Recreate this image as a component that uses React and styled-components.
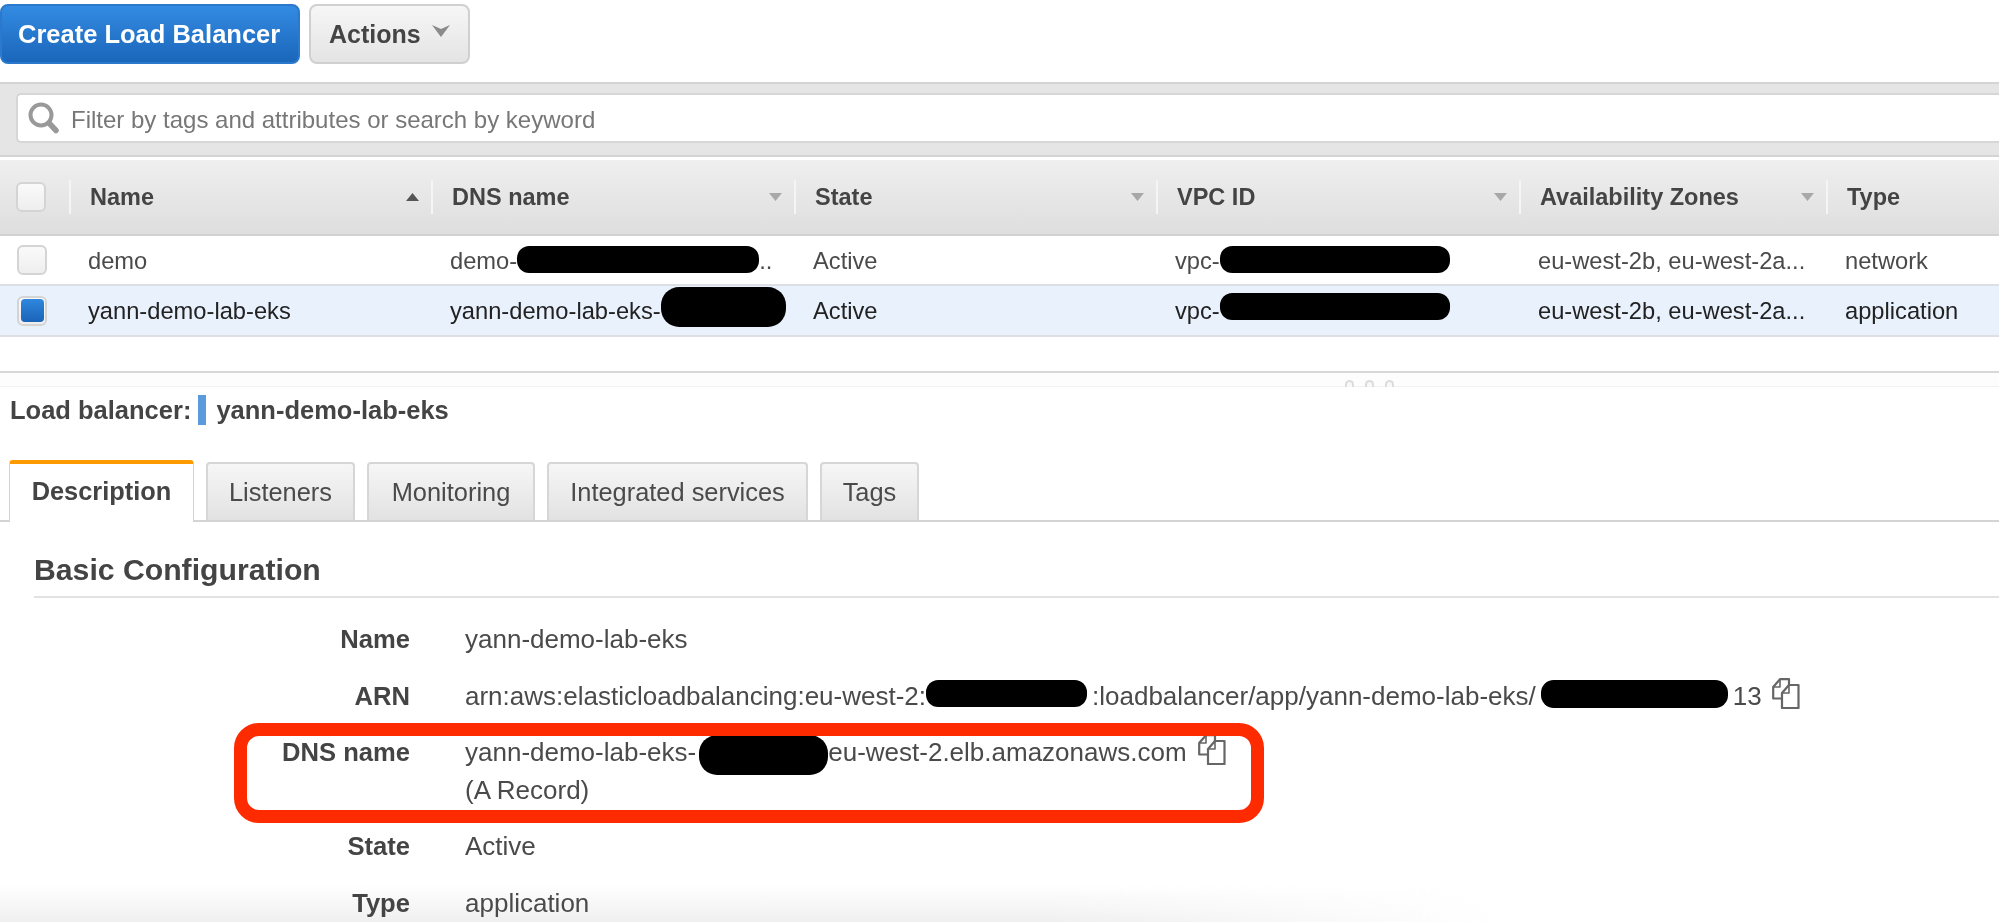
import React from "react";
import styled, { createGlobalStyle } from "styled-components";

const Global = createGlobalStyle`
  html, body { margin: 0; padding: 0; background: #fff; }
  body { font-family: "Liberation Sans", Arial, sans-serif; color: #444; overflow: hidden; }
`;

const Page = styled.div`
  position: relative;
  width: 1999px;
  height: 922px;
  overflow: hidden;
  background: #fff;
  filter: blur(0.6px);
`;

const Toolbar = styled.div`
  display: flex;
  gap: 9px;
  height: 82px;
  padding-top: 4px;
  box-sizing: border-box;
`;

const PrimaryButton = styled.button`
  width: 300px;
  height: 60px;
  box-sizing: border-box;
  padding: 0 0 0 16px;
  text-align: left;
  border: 2px solid #2a79cc;
  border-radius: 8px;
  background: linear-gradient(#338be2, #1a66ba);
  color: #fff;
  font: bold 25.5px "Liberation Sans", sans-serif;
`;

const SecondaryButton = styled.button`
  width: 161px;
  height: 60px;
  box-sizing: border-box;
  padding: 0 0 0 18px;
  display: flex;
  align-items: center;
  gap: 11px;
  border: 2px solid #d0d0d0;
  border-radius: 8px;
  background: linear-gradient(#f6f6f6, #e4e4e4);
  color: #444;
  font: bold 25px "Liberation Sans", sans-serif;
`;

const CaretLift = styled.span`
  display: flex;
  margin-bottom: 7px;
`;

const FilterBand = styled.div`
  height: 75px;
  box-sizing: border-box;
  padding: 9px 0 0 16px;
  background: #e5e5e5;
  border-top: 2px solid #d4d4d4;
  border-bottom: 2px solid #d4d4d4;
`;

const FilterInput = styled.div`
  height: 50px;
  box-sizing: border-box;
  display: flex;
  align-items: center;
  gap: 11px;
  padding-left: 10px;
  background: #fff;
  border: 2px solid #d6d6d6;
  border-right: 0;
  border-radius: 5px 0 0 5px;
  color: #777;
  font-size: 24px;
`;

const Placeholder = styled.span`
  padding-top: 3px;
`;

const Columns = "69px 362px 363px 362px 363px 307px 173px";

const HeaderRow = styled.div`
  display: grid;
  grid-template-columns: ${Columns};
  margin-top: 3px;
  height: 76px;
  box-sizing: border-box;
  background: linear-gradient(#efefef, #dedede);
  border-bottom: 2px solid #d2d2d2;
  align-items: center;
`;

const HeaderCell = styled.div`
  display: flex;
  align-items: center;
  justify-content: space-between;
  height: 34px;
  box-sizing: border-box;
  padding: 0 12px 0 19px;
  border-left: 2px solid #f5f5f5;
  font: bold 23.5px "Liberation Sans", sans-serif;
  color: #444;
`;

const CheckCell = styled.div`
  display: flex;
  align-items: center;
  padding-left: ${(p) => p.$x || 16}px;
`;

const Check = styled.span`
  display: flex;
  align-items: center;
  justify-content: center;
  width: 30px;
  height: 30px;
  box-sizing: border-box;
  border: 2px solid #d4d4d4;
  border-radius: 6px;
  background: linear-gradient(#fafafa, #eeeeee);
`;

const CheckFill = styled.span`
  width: 23px;
  height: 23px;
  border-radius: 4px;
  background: linear-gradient(#2f87de, #1a64b8);
`;

const BodyRow = styled.div`
  display: grid;
  grid-template-columns: ${Columns};
  height: ${(p) => p.$h}px;
  box-sizing: border-box;
  align-items: center;
  background: ${(p) => (p.$selected ? "#e9f1fd" : "#fff")};
  border-bottom: 2px solid #dcdfe3;
  font-size: 23.7px;
  color: ${(p) => (p.$selected ? "#222" : "#4a4a4a")};
`;

const BodyCell = styled.div`
  padding-left: 19px;
  white-space: nowrap;
  line-height: 26px;
  padding-top: 1px;
`;

const Redact = styled.span`
  display: inline-block;
  width: ${(p) => p.$w}px;
  height: ${(p) => p.$h}px;
  margin: ${(p) => p.$mt}px ${(p) => p.$r || 0}px ${(p) => p.$mb}px ${(p) => p.$l || 0}px;
  vertical-align: top;
  background: #000;
  border-radius: ${(p) => p.$h / 2.2}px;
`;

const SplitBar = styled.div`
  position: relative;
  margin-top: 34px;
  height: 13px;
  background: #fdfdfd;
  border-top: 2px solid #d8d8d8;
  border-bottom: 1px solid #f1f1f1;
`;

const GripDots = styled.div`
  position: absolute;
  left: 1345px;
  bottom: -1px;
  display: flex;
  gap: 11px;
`;

const GripDot = styled.span`
  width: 9px;
  height: 7px;
  border-radius: 5px 5px 0 0;
  border: 2px solid #dcdcdc;
  border-bottom: 0;
  box-sizing: border-box;
  background: #f8f8f8;
`;

const TitleLine = styled.div`
  display: flex;
  align-items: center;
  height: 30px;
  margin-top: 8px;
  padding-left: 10px;
  font: bold 25.5px "Liberation Sans", sans-serif;
  color: #444;
`;

const BlueMark = styled.span`
  width: 8px;
  height: 30px;
  margin: 0 10px 0 7px;
  background: #5b9bdd;
`;

const TabStrip = styled.div`
  display: flex;
  align-items: flex-end;
  gap: 12px;
  height: 62px;
  margin-top: 35px;
  padding-left: 9px;
  border-bottom: 2px solid #d4d4d4;
  box-sizing: border-box;
`;

const Tab = styled.div`
  box-sizing: border-box;
  width: ${(p) => p.$w}px;
  display: flex;
  align-items: center;
  justify-content: center;
  font-size: 25.4px;
  ${(p) =>
    p.$active
      ? `height: 62px; margin-bottom: -2px; background: #fff; border: 1px solid #d4d4d4; border-bottom: 0;
         border-top: 4px solid #ff9900; border-radius: 4px 4px 0 0; font-weight: bold; color: #444; padding-bottom: 3px;`
      : `height: 58px; background: linear-gradient(#f6f6f6, #e2e2e2); border: 2px solid #d6d6d6; border-bottom: 0;
         border-radius: 4px 4px 0 0; color: #4a4a4a;`}
`;

const Section = styled.div`
  position: relative;
  z-index: 1;
  margin-left: 34px;
`;

const SectionTitle = styled.h2`
  margin: 0;
  height: 76px;
  box-sizing: border-box;
  padding-top: 32px;
  font: bold 30.2px/32px "Liberation Sans", sans-serif;
  color: #444;
  border-bottom: 2px solid #e2e2e2;
`;

const Details = styled.div`
  display: grid;
  grid-template-columns: 376px 1fr;
  column-gap: 55px;
  margin-top: 26px;
  font-size: 26px;
  line-height: 30px;
`;

const Label = styled.div`
  text-align: right;
  font-weight: bold;
  font-size: 25.6px;
  color: #444;
  margin-bottom: ${(p) => p.$gap}px;
`;

const Value = styled.div`
  color: #4a4a4a;
  white-space: nowrap;
  margin-bottom: ${(p) => p.$gap}px;
  height: ${(p) => (p.$tall ? 68 : 30)}px;
`;

const SubLine = styled.div`
  margin-top: 8px;
`;

const CopyWrap = styled.span`
  display: inline-block;
  vertical-align: top;
  margin: -3px 0 0 ${(p) => p.$l}px;
  height: 30px;
`;

const Annotation = styled.div`
  position: absolute;
  z-index: 2;
  left: 234px;
  top: 723px;
  width: 1030px;
  height: 100px;
  box-sizing: border-box;
  border: 13px solid #fe2b00;
  border-radius: 25px;
  pointer-events: none;
`;

const BottomFade = styled.div`
  position: absolute;
  z-index: 0;
  left: 0;
  bottom: 0;
  width: 1500px;
  height: 38px;
  background: linear-gradient(to bottom, rgba(238,238,238,0), rgba(238,238,238,0.9));
  -webkit-mask-image: linear-gradient(to right, #000 70%, transparent);
  mask-image: linear-gradient(to right, #000 70%, transparent);
  pointer-events: none;
`;

const SearchIcon = () => (
  <svg width="32" height="32" viewBox="0 0 32 32" fill="none">
    <circle cx="13" cy="13" r="10.5" stroke="#999" strokeWidth="4" fill="#fff" />
    <path d="M21 21 L28 28.5" stroke="#999" strokeWidth="5.5" strokeLinecap="round" />
  </svg>
);

const Caret = ({ up, color = "#a8a8a8", w = 13, h = 8 }) => (
  <svg width={w} height={h} viewBox="0 0 13 8">
    <path d={up ? "M6.5 0 L13 8 H0 Z" : "M0 0 H13 L6.5 8 Z"} fill={color} />
  </svg>
);

const ActionsCaret = () => (
  <svg width="18" height="12" viewBox="0 0 18 12">
    <path d="M0 0 L9 4 L18 0 L9 12 Z" fill="#8a8a8a" />
  </svg>
);

const CopyIcon = () => (
  <svg
    width="28"
    height="31"
    viewBox="0 0 28 31"
    fill="none"
    stroke="#666"
    strokeWidth="2.2"
    strokeLinejoin="round"
  >
    <path d="M9 20.5 H1.2 V9 L8 1.2 H17 V7" />
    <path d="M8 1.5 V9 H1.5" strokeWidth="1.6" />
    <path d="M10 30 V15 L17 7 H26.5 V30 Z" fill="#fff" />
    <path d="M17 7.5 V15 H10.5" strokeWidth="1.6" />
  </svg>
);

const Name = "yann-demo-lab-eks";
const rowCells = ["Name", "DNS name", "State", "VPC ID", "Availability Zones", "Type"];

export default function App() {
  return (
    <Page>
      <Global />
      <Toolbar>
        <PrimaryButton>Create Load Balancer</PrimaryButton>
        <SecondaryButton>
          Actions
          <CaretLift><ActionsCaret /></CaretLift>
        </SecondaryButton>
      </Toolbar>
      <FilterBand>
        <FilterInput>
          <SearchIcon />
          <Placeholder>Filter by tags and attributes or search by keyword</Placeholder>
        </FilterInput>
      </FilterBand>
      <HeaderRow>
        <CheckCell><Check /></CheckCell>
        {rowCells.map((c, i) => (
          <HeaderCell key={c}>
            {c}
            {i === 0 && <Caret up color="#555" />}
            {i > 0 && i < 5 && <Caret />}
          </HeaderCell>
        ))}
      </HeaderRow>
      <BodyRow $h={50}>
        <CheckCell $x={17}><Check /></CheckCell>
        <BodyCell>demo</BodyCell>
        <BodyCell>demo-<Redact $w={242} $h={27} $mt={-2} $mb={0} />..</BodyCell>
        <BodyCell>Active</BodyCell>
        <BodyCell>vpc-<Redact $w={230} $h={27} $mt={-2} $mb={0} /></BodyCell>
        <BodyCell>eu-west-2b, eu-west-2a...</BodyCell>
        <BodyCell>network</BodyCell>
      </BodyRow>
      <BodyRow $h={51} $selected>
        <CheckCell $x={17}><Check><CheckFill /></Check></CheckCell>
        <BodyCell>{Name}</BodyCell>
        <BodyCell>{Name}-<Redact $w={125} $h={40} $mt={-11} $mb={-5} /></BodyCell>
        <BodyCell>Active</BodyCell>
        <BodyCell>vpc-<Redact $w={230} $h={27} $mt={-5} $mb={0} /></BodyCell>
        <BodyCell>eu-west-2b, eu-west-2a...</BodyCell>
        <BodyCell>application</BodyCell>
      </BodyRow>
      <SplitBar>
        <GripDots><GripDot /><GripDot /><GripDot /></GripDots>
      </SplitBar>
      <TitleLine>
        Load balancer:<BlueMark />{Name}
      </TitleLine>
      <TabStrip>
        <Tab $active $w={185}>Description</Tab>
        <Tab $w={149}>Listeners</Tab>
        <Tab $w={168}>Monitoring</Tab>
        <Tab $w={261}>Integrated services</Tab>
        <Tab $w={99}>Tags</Tab>
      </TabStrip>
      <Section>
        <SectionTitle>Basic Configuration</SectionTitle>
        <Details>
          <Label $gap={27}>Name</Label>
          <Value $gap={27}>{Name}</Value>
          <Label $gap={26}>ARN</Label>
          <Value $gap={26}>
            arn:aws:elasticloadbalancing:eu-west-2:<Redact $w={161} $h={27} $mt={-1} $mb={0} $r={5} />:loadbalancer/app/{Name}/<Redact $w={187} $h={28} $mt={-1} $mb={0} $l={5} $r={5} />13
            <CopyWrap $l={10}><CopyIcon /></CopyWrap>
          </Value>
          <Label $gap={26}>DNS name</Label>
          <Value $gap={26} $tall>
            {Name}-<Redact $w={129} $h={40} $mt={-2} $mb={-8} $l={3} />eu-west-2.elb.amazonaws.com
            <CopyWrap $l={11}><CopyIcon /></CopyWrap>
            <SubLine>(A Record)</SubLine>
          </Value>
          <Label $gap={27}>State</Label>
          <Value $gap={27}>Active</Value>
          <Label $gap={0}>Type</Label>
          <Value $gap={0}>application</Value>
        </Details>
      </Section>
      <Annotation />
      <BottomFade />
    </Page>
  );
}
